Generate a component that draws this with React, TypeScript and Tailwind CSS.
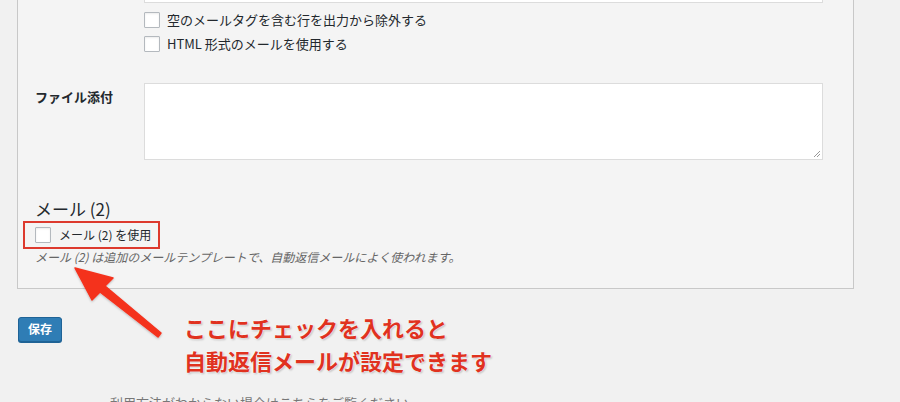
import React from 'react';

const jp = { fontFamily: '"Noto Sans CJK JP", "Noto Sans", sans-serif' };

function Check() {
  return (
    <span className="inline-block h-4 w-4 shrink-0 rounded-[1px] border border-[#b4b9be] bg-white shadow-[inset_0_1px_2px_rgba(0,0,0,0.08)]" />
  );
}

function Arrow() {
  return (
    <svg className="absolute left-0 top-0" width="200" height="350" viewBox="0 0 200 350">
      <defs>
        <filter id="sh" x="-20%" y="-20%" width="140%" height="140%">
          <feDropShadow dx="0" dy="1" stdDeviation="1" floodColor="#000" floodOpacity="0.25" />
        </filter>
      </defs>
      <path
        d="M75 268 L113 278 L105 286 L161 333 L158 337 L100 292 L92 300 Z"
        fill="#f4321e"
        stroke="#f4321e"
        strokeLinejoin="round"
        strokeWidth="1.5"
        filter="url(#sh)"
      />
    </svg>
  );
}

export default function App() {
  return (
    <div className="relative h-[402px] w-full overflow-hidden bg-[#f1f1f1] text-[#23282d]" style={jp}>
      <div className="ml-[17px] w-[837px] border-x border-b border-[#c8c8c8] bg-[#f4f4f4] pb-[22px]">
        <div className="ml-[126px] h-[3px] w-[679px] border-x border-b border-[#dcdcdc] bg-white" />

        <div className="ml-[126px] mt-[9px] flex flex-col gap-[8px] text-[13px]">
          <label className="flex h-4 items-center gap-[7px]">
            <Check />
            <span>空のメールタグを含む行を出力から除外する</span>
          </label>
          <label className="flex h-4 items-center gap-[7px]">
            <Check />
            <span>HTML 形式のメールを使用する</span>
          </label>
        </div>

        <div className="mt-[31px] flex">
          <div className="w-[126px] pl-[17px] pt-[4px] text-[13px] font-bold">ファイル添付</div>
          <div className="relative h-[77px] w-[679px] border border-[#dcdcdc] bg-white">
            <svg className="absolute bottom-[1px] right-[1px]" width="8" height="8" viewBox="0 0 8 8">
              <path d="M1 7 L7 1 M4 7 L7 4" stroke="#999" strokeWidth="1" />
            </svg>
          </div>
        </div>

        <div className="mt-[38px] pl-[17px] text-[17px] leading-[22px]">メール (2)</div>

        <div className="ml-[5px] mt-[1px] flex h-[28px] w-[137px] items-center gap-[8px] border-2 border-[#dd3a2e] pl-[10px] text-[12px]">
          <Check />
          <span>メール (2) を使用</span>
        </div>

        <div className="-mt-[1px] pl-[17px] text-[12px] italic leading-[18px] text-[#666]">
          メール (2) は追加のメールテンプレートで、自動返信メールによく使われます。
        </div>
      </div>

      <div className="ml-[18px] mt-[26px]">
        <button className="h-[25px] w-[44px] rounded-[3px] border border-[#1f6396] bg-[#2f7db5] text-[12px] font-bold text-white shadow-[0_1px_0_#1f6396]">
          保存
        </button>
      </div>

      <div className="ml-[110px] mt-[53px] text-[13px] leading-[16px] text-[#777]">利用方法がわからない場合はこちらをご覧ください</div>

      <Arrow />

      <div
        className="absolute left-[184px] top-[311px] text-[22px] font-bold leading-[33px] text-[#e0321f]"
        style={{ textShadow: '0 0 2px #fff, 0 0 2px #fff, 1px 1px 2px rgba(0,0,0,0.3)' }}
      >
        <div>ここにチェックを入れると</div>
        <div>自動返信メールが設定できます</div>
      </div>
    </div>
  );
}
